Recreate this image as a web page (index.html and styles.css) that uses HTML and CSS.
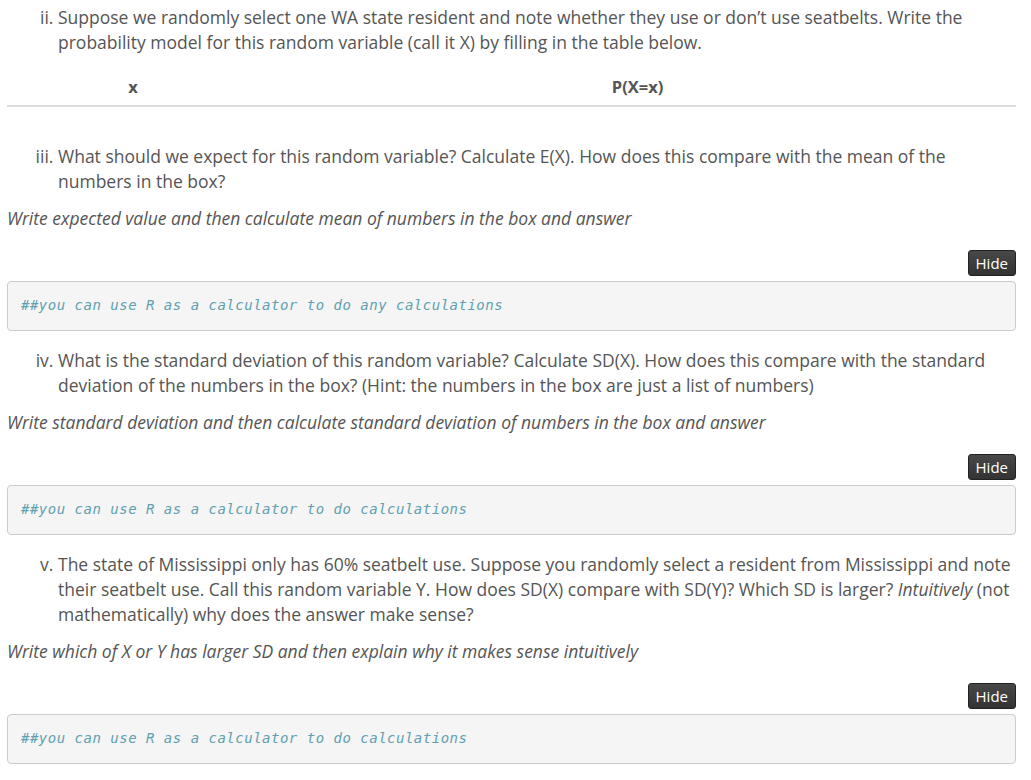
FILE: index.html
```html
<!DOCTYPE html>
<html>
<head>
<meta charset="utf-8">
<link rel="stylesheet" href="styles.css">
</head>
<body>
<div class="page">
  <ol class="q" start="2">
    <li>Suppose we randomly select one WA state resident and note whether they use or don’t use seatbelts. Write the probability model for this random variable (call it X) by filling in the table below.</li>
  </ol>
  <table class="prob">
    <thead>
      <tr><th class="cx">x</th><th class="cp">P(X=x)</th></tr>
    </thead>
  </table>

  <ol class="q q3" start="3">
    <li>What should we expect for this random variable? Calculate E(X). How does this compare with the mean of the numbers in the box?</li>
  </ol>
  <p class="answer">Write expected value and then calculate mean of numbers in the box and answer</p>
  <div class="chunk">
    <div class="bar"><button class="hide">Hide</button></div>
    <pre class="code"><span class="co">##you can use R as a calculator to do any calculations</span></pre>
  </div>

  <ol class="q" start="4">
    <li>What is the standard deviation of this random variable? Calculate SD(X). How does this compare with the standard deviation of the numbers in the box? (Hint: the numbers in the box are just a list of numbers)</li>
  </ol>
  <p class="answer">Write standard deviation and then calculate standard deviation of numbers in the box and answer</p>
  <div class="chunk">
    <div class="bar"><button class="hide">Hide</button></div>
    <pre class="code"><span class="co">##you can use R as a calculator to do calculations</span></pre>
  </div>

  <ol class="q" start="5">
    <li>The state of Mississippi only has 60% seatbelt use. Suppose you randomly select a resident from Mississippi and note their seatbelt use. Call this random variable Y. How does SD(X) compare with SD(Y)? Which SD is larger? <em>Intuitively</em> (not mathematically) why does the answer make sense?</li>
  </ol>
  <p class="answer">Write which of X or Y has larger SD and then explain why it makes sense intuitively</p>
  <div class="chunk">
    <div class="bar"><button class="hide">Hide</button></div>
    <pre class="code"><span class="co">##you can use R as a calculator to do calculations</span></pre>
  </div>
</div>
</body>
</html>
```
FILE: styles.css
```css
html, body {
  margin: 0;
  padding: 0;
  background: #ffffff;
}
body {
  font-family: "Open Sans", "Liberation Sans", sans-serif;
  font-size: 17.5px;
  line-height: 25px;
  color: #555555;
}
.page {
  width: 1009px;
  padding: 5px 0 0 7px;
}
.q {
  list-style-type: lower-roman;
  margin: 0 0 12px 0;
  padding-left: 51px;
}
.q li {
  padding-left: 0;
}
.prob {
  width: 100%;
  border-collapse: collapse;
  margin: 9px 0 37px 0;
}
.prob th {
  font-size: 16.5px;
  font-weight: bold;
  line-height: 25px;
  padding: 7px 8px 6px 8px;
  border-bottom: 2px solid #dddddd;
  text-align: center;
}
.prob .cx { width: 25%; }
.answer {
  margin: 0 0 19px 0;
  font-style: italic;
}
.chunk {
  margin-bottom: 17px;
}
.bar {
  display: flex;
  justify-content: flex-end;
  margin-bottom: 5px;
}
.hide {
  font-family: "Open Sans", "Liberation Sans", sans-serif;
  font-size: 15px;
  line-height: 20px;
  height: 26px;
  padding: 2px 7px;
  color: #ffffff;
  background: linear-gradient(#484848, #333333);
  border: 1px solid #222222;
  border-radius: 3px;
}
.code {
  margin: 0;
  padding: 11px 13px 12px 13px;
  background: #f5f5f5;
  border: 1px solid #cccccc;
  border-radius: 4px;
  font-family: "DejaVu Sans Mono", "Liberation Mono", monospace;
  font-size: 14px;
  line-height: 25px;
  letter-spacing: 0.5px;
}
.co {
  color: #60a0b0;
  font-style: italic;
}
```
